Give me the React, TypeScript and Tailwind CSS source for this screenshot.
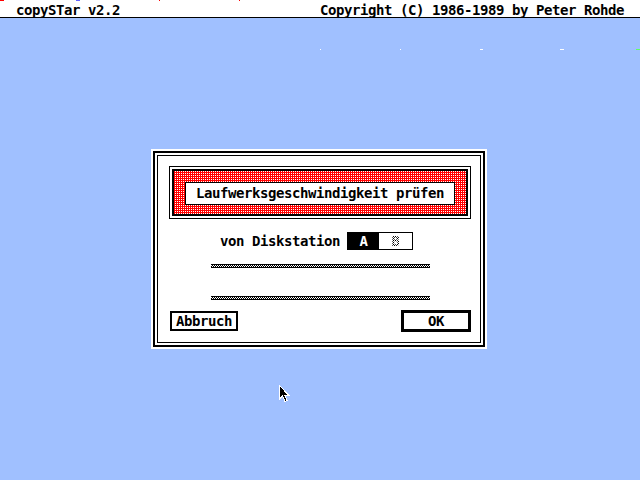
import React from 'react';

const mono =
  "font-['DejaVu_Sans_Mono','Liberation_Mono',monospace] font-bold text-[14px] leading-[16px] tracking-[-0.43px] text-black whitespace-pre";

const Bar: React.FC = () => (
  <div className="ml-[53px] w-[219px] h-[4px] border-y border-black bg-[conic-gradient(#000_25%,#fff_0_50%,#000_0_75%,#fff_0)] bg-[length:2px_2px]" />
);

const App: React.FC = () => {
  return (
    <div className={`relative w-[640px] h-[480px] overflow-hidden bg-[#a0c0ff] ${mono}`}>
      {/* menu bar */}
      <div className="h-[18px] bg-white border-b border-black flex justify-between px-[16px] pt-[2px]">
        <span>copySTar v2.2</span>
        <span>Copyright (C) 1986-1989 by Peter Rohde</span>
      </div>

      {/* stray pixels left by the emulator */}
      <span className="absolute left-0 top-0 w-[4px] h-[1px] bg-[#ff0000]" />
      <span className="absolute left-[76px] top-0 w-[4px] h-[1px] bg-[#6060ff]" />
      <span className="absolute left-[159px] top-0 w-[1px] h-[1px] bg-[#ff0000]" />
      <span className="absolute left-[239px] top-0 w-[1px] h-[1px] bg-[#ff0000]" />
      <span className="absolute left-[320px] top-[49px] w-[1px] h-[1px] bg-white" />
      <span className="absolute left-[400px] top-[49px] w-[1px] h-[1px] bg-white" />
      <span className="absolute left-[480px] top-[49px] w-[3px] h-[1px] bg-white" />
      <span className="absolute left-[560px] top-[49px] w-[4px] h-[1px] bg-white" />
      <span className="absolute left-[636px] top-[49px] w-[4px] h-[1px] bg-[#60ff60]" />

      {/* dialog */}
      <div className="ml-[151px] mt-[131px] w-[336px] h-[200px] bg-white p-[2px]">
        <div className="h-full border-2 border-black bg-white p-[2px]">
          <div className="h-full border border-black bg-white flex flex-col pt-[10px]">
            {/* title */}
            <div className="ml-[11px] w-[302px] h-[53px] border border-black p-[2px] bg-white">
              <div className="h-full border-2 border-black bg-[conic-gradient(#fff_25%,#f00_0)] bg-[length:2px_2px] flex items-center justify-center pt-[1px]">
                <div className="w-[270px] h-[23px] border border-black bg-white flex items-center justify-center">
                  Laufwerksgeschwindigkeit prüfen
                </div>
              </div>
            </div>

            {/* drive select */}
            <div className="mt-[13px] ml-[62px] h-[18px] flex items-center">
              <span>von Diskstation</span>
              <div className="ml-[7px] w-[66px] h-[18px] border border-black flex">
                <div className="w-[31px] h-full bg-black text-white flex items-center justify-center">A</div>
                <div className="flex-1 h-full bg-white flex items-center justify-center">
                  <span className="bg-[conic-gradient(#000_25%,#fff_0_50%,#000_0_75%,#fff_0)] bg-[length:2px_2px] bg-clip-text text-transparent">B</span>
                </div>
              </div>
            </div>

            <div className="mt-[14px]">
              <Bar />
            </div>
            <div className="mt-[28px]">
              <Bar />
            </div>

            {/* buttons */}
            <div className="mt-[10px] h-[22px] flex items-center justify-between pl-[12px] pr-[9px]">
              <div className="w-[68px] h-[20px] border-2 border-black flex items-center justify-center">Abbruch</div>
              <div className="w-[70px] h-[22px] border-[3px] border-black flex items-center justify-center">OK</div>
            </div>
          </div>
        </div>
      </div>

      {/* mouse pointer */}
      <svg className="absolute left-[279px] top-[385px]" width="12" height="19" viewBox="0 0 12 19">
        <path
          d="M0.5 0.5 L0.5 14 L3.5 11 L6 16.5 L8 15.5 L5.7 10.5 L10 10.5 Z"
          fill="#000"
          stroke="#fff"
          strokeWidth="1"
          shapeRendering="crispEdges"
        />
      </svg>
    </div>
  );
};

export default App;
